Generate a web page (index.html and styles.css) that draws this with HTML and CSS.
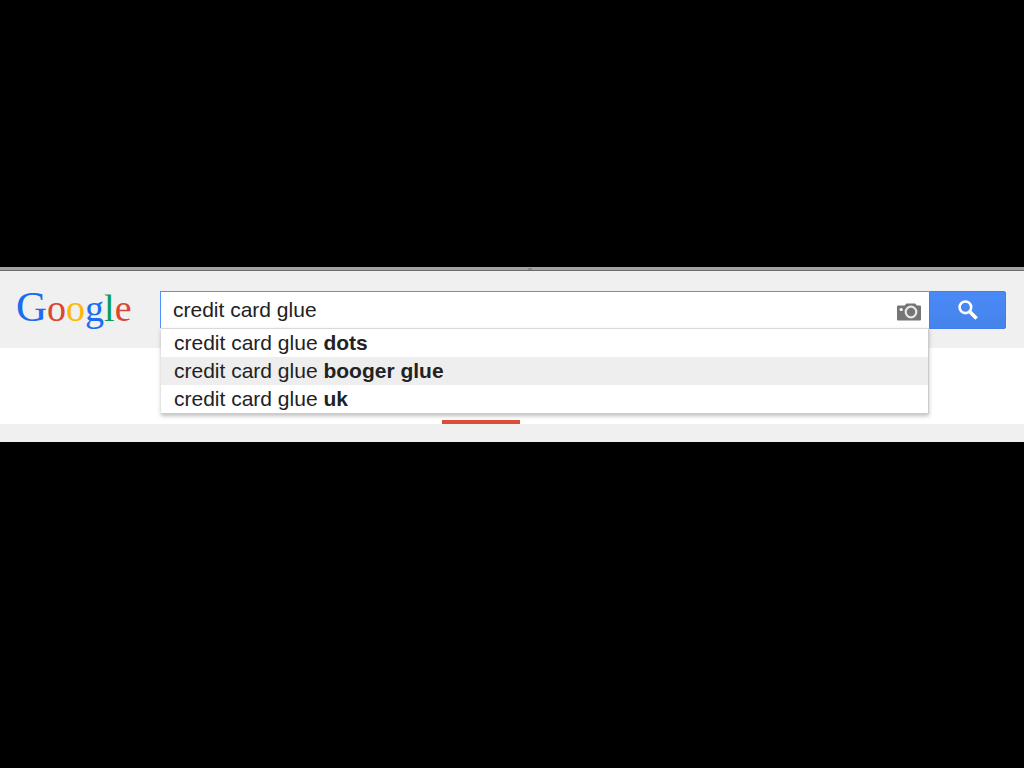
FILE: index.html
```html
<!DOCTYPE html>
<html lang="en">
<head>
<meta charset="utf-8">
<title>credit card glue - Google Search</title>
<link rel="stylesheet" href="styles.css">
</head>
<body>
<main class="browser">
  <div class="chrome-edge"><span class="chrome-notch"></span></div>
  <header class="header">
    <a class="logo" href="#" aria-label="Google"><span class="logo-cap blue">G</span><span class="red">o</span><span class="yellow">o</span><span class="blue">g</span><span class="green">l</span><span class="red">e</span></a>
    <form class="search" role="search">
      <div class="field">
        <input class="query" type="text" aria-label="Search" value="credit card glue">
        <button class="camera" type="button" aria-label="Search by image">
          <svg width="24" height="18" viewBox="0 0 24 18">
            <path fill="#757575" d="M1 2.5H7.500L9.500 .5H18L20 2.500H23Q24 2.500 24 3.500V16.500Q24 17.500 23 17.500H1Q0 17.500 0 16.500V3.500Q0 2.500 1 2.500Z"/>
            <circle cx="14" cy="9" r="5.3" fill="#757575" stroke="#e8e8e8" stroke-width="2.2"/>
            <circle cx="4.2" cy="6.5" r="1.6" fill="#fff"/>
          </svg>
        </button>
        <ul class="suggestions">
          <li><a class="suggestion" href="#">credit card glue <b>dots</b></a></li>
          <li><a class="suggestion active" href="#">credit card glue <b>booger glue</b></a></li>
          <li><a class="suggestion" href="#">credit card glue <b>uk</b></a></li>
        </ul>
      </div>
      <button class="submit" type="submit" aria-label="Search">
        <svg width="20" height="20" viewBox="0 0 20 20" fill="none" stroke="#fff">
          <circle cx="7.4" cy="7.3" r="5.8" stroke-width="2.6"/>
          <path d="M11.6 11.600L18.600 18.600" stroke-width="3.6"/>
        </svg>
      </button>
    </form>
  </header>
  <nav class="tabs"><span class="tab-marker"></span></nav>
  <div class="toolbar"></div>
</main>
</body>
</html>
```
FILE: styles.css
```css
* { box-sizing: border-box; }
body {
  margin: 0;
  padding-top: 267px;
  background: #000;
  color: #222;
  font-family: "Liberation Sans", Arial, sans-serif;
  font-size: 21px;
}
.browser { background: #fff; }
.chrome-edge {
  position: relative;
  height: 4px;
  background: #a3a3a3;
  border-bottom: 1px solid #6e6e6e;
}
.chrome-notch {
  position: absolute;
  left: 52%;
  margin-left: -4px;
  top: 1px;
  width: 4px;
  height: 2px;
  background: #8a8a8a;
}
.header {
  display: flex;
  align-items: flex-start;
  height: 77px;
  padding: 20px 18px 0 16px;
  background: #f0f0f0;
}
.logo {
  flex: 0 0 144px;
  font: 38px/32px "Liberation Serif", "Times New Roman", serif;
  text-decoration: none;
  white-space: nowrap;
}
.logo-cap { font-size: 43px; }
.blue { color: #1a6cf0; }
.red { color: #db4632; }
.yellow { color: #fdb90b; }
.green { color: #0a9d57; }
.search { display: flex; flex: 1; }
.field {
  position: relative;
  display: flex;
  align-items: center;
  flex: 1;
  height: 37px;
  padding-right: 8px;
  background: #fff;
  border: 1px solid #4d90fe;
  border-width: 1px 0 0 1px;
}
.query {
  flex: 1;
  min-width: 0;
  height: 36px;
  padding: 0 0 0 12px;
  border: 0;
  outline: 0;
  background: none;
  color: #222;
  font: inherit;
}
.camera {
  display: flex;
  padding: 4px 0 0;
  border: 0;
  background: none;
}
.submit {
  display: flex;
  align-items: center;
  justify-content: center;
  width: 77px;
  height: 38px;
  padding: 0;
  border: 1px solid #3f7eed;
  border-radius: 0 2px 2px 0;
  background: linear-gradient(#4a8af8, #4683ea);
}
.suggestions {
  position: absolute;
  z-index: 1;
  top: 100%;
  left: 0;
  right: 0;
  margin: 0;
  padding: 0;
  list-style: none;
  background: #fff;
  border: 1px solid #ccc;
  border-top-color: #d9d9d9;
  border-left: 0;
  box-shadow: 0 2px 4px rgba(0, 0, 0, 0.25);
}
.suggestion {
  display: block;
  padding-left: 13px;
  color: #222;
  line-height: 28px;
  text-decoration: none;
}
.active { background: #eee; }
.tabs {
  display: flex;
  align-items: flex-end;
  height: 76px;
  padding-left: 442px;
}
.tab-marker {
  width: 78px;
  height: 4px;
  background: #dd4b39;
}
.toolbar { height: 18px; background: #f0f0f0; }
```
